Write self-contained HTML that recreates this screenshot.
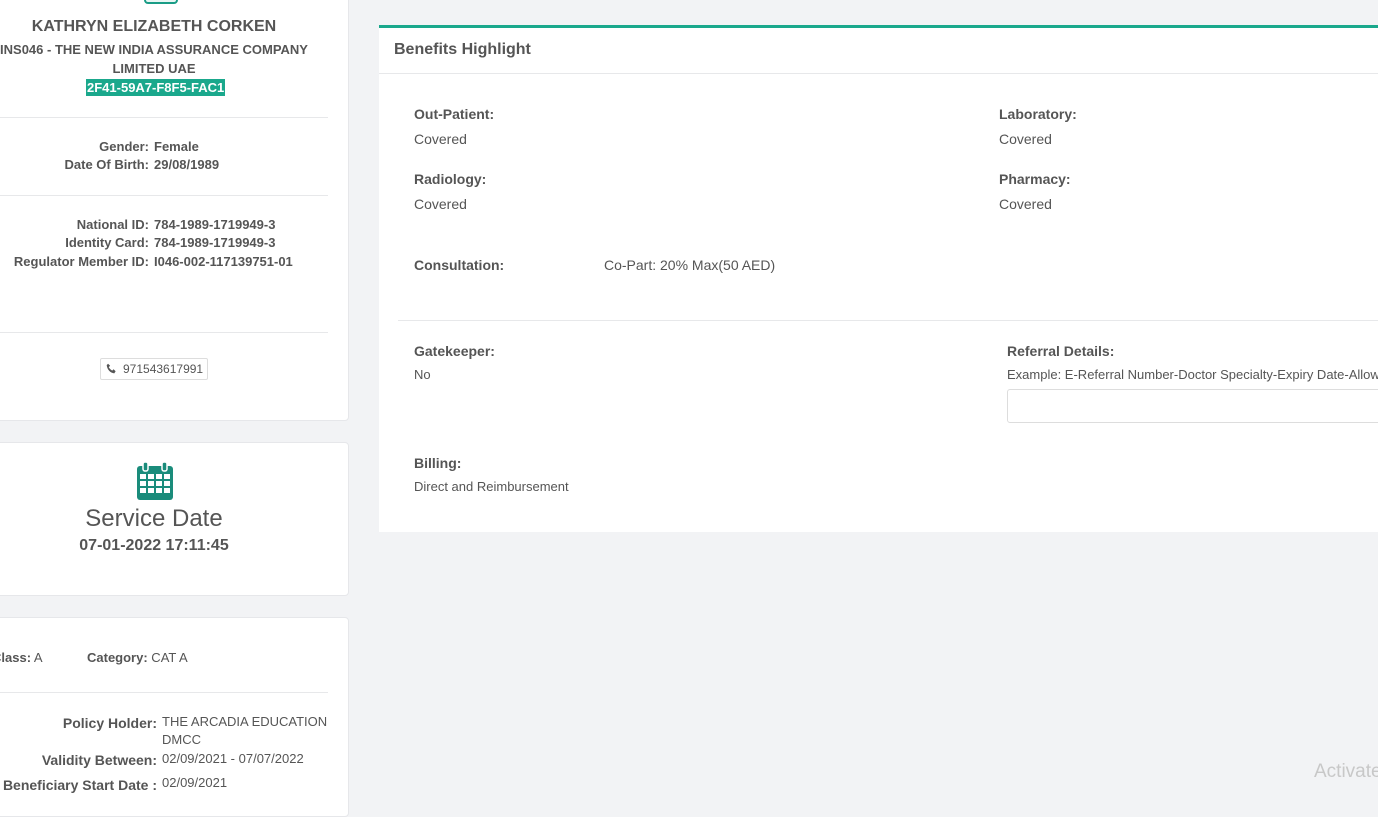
<!DOCTYPE html>
<html><head><meta charset="utf-8"><style>
*{margin:0;padding:0;box-sizing:border-box}
body{width:1378px;height:788px;overflow:hidden;background:#f2f3f5;font-family:"Liberation Sans",Arial,sans-serif;color:#555;position:relative}
.a{position:absolute;white-space:nowrap}
.card{position:absolute;background:#fff;border:1px solid #e6e7ea;border-radius:4px}
.hr{position:absolute;height:1px;background:#e7e8ea}
.b{font-weight:bold}
.c{text-align:center}
.r{text-align:right}
.f13{font-size:13px}
.f14{font-size:14px}
</style></head><body>
<div class="card" style="left:-5px;top:-5px;width:354px;height:426px"></div>
<div class="a" style="left:144px;top:-8px;width:34px;height:12px;border:2px solid #1a9c86;border-radius:4px;background:#e8f6f3"></div>
<div class="a c b" style="left:0;top:18px;width:308px;font-size:16px;color:#555">KATHRYN ELIZABETH CORKEN</div>
<div class="a c b f13" style="left:0;top:42px;width:308px;color:#555">INS046 - THE NEW INDIA ASSURANCE COMPANY</div>
<div class="a c b f13" style="left:0;top:61px;width:308px;color:#555">LIMITED UAE</div>
<div class="a b f13" style="left:86px;top:79px;background:#1aa88c;color:#fff;padding:0 1px;height:17px;line-height:17px">2F41-59A7-F8F5-FAC1</div>
<div class="hr" style="left:0;top:117px;width:328px"></div>
<div class="a r b f13" style="left:0;top:139px;width:149px">Gender:</div><div class="a b f13" style="left:154px;top:139px">Female</div>
<div class="a r b f13" style="left:0;top:157px;width:149px">Date Of Birth:</div><div class="a b f13" style="left:154px;top:157px">29/08/1989</div>
<div class="hr" style="left:0;top:195px;width:328px"></div>
<div class="a r b f13" style="left:0;top:217px;width:149px">National ID:</div><div class="a b f13" style="left:154px;top:217px">784-1989-1719949-3</div>
<div class="a r b f13" style="left:0;top:235px;width:149px">Identity Card:</div><div class="a b f13" style="left:154px;top:235px">784-1989-1719949-3</div>
<div class="a r b f13" style="left:0;top:254px;width:149px">Regulator Member ID:</div><div class="a b f13" style="left:154px;top:254px">I046-002-117139751-01</div>
<div class="hr" style="left:0;top:332px;width:328px"></div>
<div class="a" style="left:100px;top:358px;width:108px;height:22px;border:1px solid #ddd;border-radius:2px;font-size:12px;line-height:20px;padding-left:22px;color:#555">971543617991</div>
<svg class="a" style="left:106px;top:363px" width="11" height="11" viewBox="0 0 16 16"><path d="M3 1l3 3-2 2c1 2 3 4 5 5l2-2 3 3-2 3C6 14 2 10 1 3z" fill="#555"/></svg>

<div class="card" style="left:-5px;top:442px;width:354px;height:154px"></div>
<svg class="a" style="left:136px;top:461px" width="38" height="40" viewBox="0 0 38 40"><rect x="1" y="5" width="36" height="34" rx="3" fill="#1a8c7b"/><rect x="7" y="1" width="5" height="9" rx="2" fill="#1a8c7b" stroke="#fff" stroke-width="1.5"/><rect x="26" y="1" width="5" height="9" rx="2" fill="#1a8c7b" stroke="#fff" stroke-width="1.5"/><g fill="#fff"><rect x="4" y="13" width="6" height="5"/><rect x="12" y="13" width="6" height="5"/><rect x="20" y="13" width="6" height="5"/><rect x="28" y="13" width="6" height="5"/><rect x="4" y="20" width="6" height="5"/><rect x="12" y="20" width="6" height="5"/><rect x="20" y="20" width="6" height="5"/><rect x="28" y="20" width="6" height="5"/><rect x="4" y="27" width="6" height="5"/><rect x="12" y="27" width="6" height="5"/><rect x="20" y="27" width="6" height="5"/><rect x="28" y="27" width="6" height="5"/></g></svg>
<div class="a c" style="left:0;top:505px;width:308px;font-size:24px;color:#555">Service Date</div>
<div class="a c b" style="left:0;top:537px;width:308px;font-size:16px;color:#555">07-01-2022 17:11:45</div>

<div class="card" style="left:-5px;top:617px;width:354px;height:200px"></div>
<div class="a f13" style="left:-8px;top:650px"><b>Class:</b> A</div>
<div class="a f13" style="left:87px;top:650px"><b>Category:</b> CAT A</div>
<div class="hr" style="left:0;top:692px;width:328px"></div>
<div class="a r b f14" style="left:0;top:715px;width:157px">Policy Holder:</div><div class="a f13" style="left:162px;top:714px">THE ARCADIA EDUCATION</div>
<div class="a f13" style="left:162px;top:732px">DMCC</div>
<div class="a r b f14" style="left:0;top:752px;width:157px">Validity Between:</div><div class="a f13" style="left:162px;top:751px">02/09/2021 - 07/07/2022</div>
<div class="a r b f14" style="left:0;top:777px;width:157px">Beneficiary Start Date :</div><div class="a f13" style="left:162px;top:775px">02/09/2021</div>

<div class="a" style="left:379px;top:25px;width:999px;height:507px;background:#fff;border-top:3px solid #1aa88c"></div>
<div class="a b" style="left:394px;top:41px;font-size:16px;color:#555">Benefits Highlight</div>
<div class="hr" style="left:379px;top:73px;width:999px"></div>
<div class="a b f14" style="left:414px;top:106px">Out-Patient:</div><div class="a f14" style="left:414px;top:131px">Covered</div>
<div class="a b f14" style="left:414px;top:171px">Radiology:</div><div class="a f14" style="left:414px;top:196px">Covered</div>
<div class="a b f14" style="left:999px;top:106px">Laboratory:</div><div class="a f14" style="left:999px;top:131px">Covered</div>
<div class="a b f14" style="left:999px;top:171px">Pharmacy:</div><div class="a f14" style="left:999px;top:196px">Covered</div>
<div class="a b f14" style="left:414px;top:257px">Consultation:</div><div class="a f14" style="left:604px;top:257px">Co-Part: 20% Max(50 AED)</div>
<div class="hr" style="left:398px;top:320px;width:980px"></div>
<div class="a b f14" style="left:414px;top:343px">Gatekeeper:</div><div class="a f13" style="left:414px;top:367px">No</div>
<div class="a b f14" style="left:1007px;top:343px">Referral Details:</div>
<div class="a f13" style="left:1007px;top:367px">Example: E-Referral Number-Doctor Specialty-Expiry Date-Allowed</div>
<div class="a" style="left:1007px;top:389px;width:380px;height:34px;border:1px solid #ddd;border-radius:3px"></div>
<div class="a b f14" style="left:414px;top:455px">Billing:</div><div class="a f13" style="left:414px;top:479px">Direct and Reimbursement</div>
<div class="a" style="left:1314px;top:761px;font-size:19px;color:#c8c8c8">Activate</div>
</body></html>
